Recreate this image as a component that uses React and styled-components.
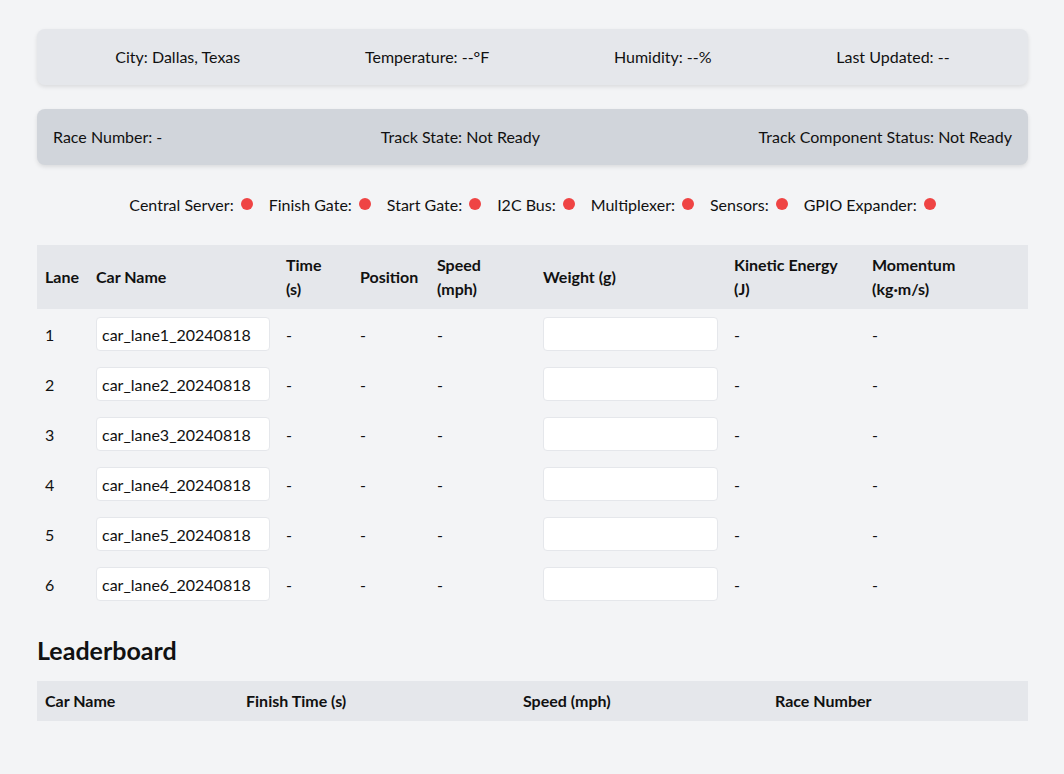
import React from 'react'
import styled, { createGlobalStyle } from 'styled-components'

const GlobalStyle = createGlobalStyle`
  body {
    margin: 0;
    background: #f3f4f6;
    font-family: Lato, "Open Sans", sans-serif;
    font-size: 16px;
    color: #111;
  }
`

const Page = styled.div`
  padding: 29px 36px 40px 37px;
`

const WeatherCard = styled.div`
  display: flex;
  justify-content: space-around;
  align-items: center;
  height: 56px;
  padding: 0 16px 1px;
  box-sizing: border-box;
  background: #e5e7eb;
  border-radius: 8px;
  box-shadow: 0 2px 4px rgba(0, 0, 0, 0.1);
`

const TrackCard = styled.div`
  display: flex;
  justify-content: space-between;
  align-items: center;
  height: 56px;
  margin-top: 24px;
  padding: 0 16px 1px;
  box-sizing: border-box;
  background: #d1d5db;
  border-radius: 8px;
  box-shadow: 0 2px 4px rgba(0, 0, 0, 0.1);
`

const StatusRow = styled.div`
  display: flex;
  justify-content: center;
  align-items: center;
  gap: 16px;
  height: 80px;
  padding-bottom: 2px;
  box-sizing: border-box;
`

const StatusItem = styled.div`
  display: flex;
  align-items: center;
  gap: 7px;
`

const Dot = styled.span`
  width: 12px;
  height: 12px;
  border-radius: 50%;
  background: ${p => (p.$ok ? '#22c55e' : '#ef4444')};
`

const Table = styled.table`
  width: 100%;
  border-collapse: collapse;
  table-layout: fixed;
`

const Th = styled.th`
  box-sizing: border-box;
  background: #e5e7eb;
  text-align: left;
  font-weight: 700;
  padding: 0 8px;
  height: ${p => p.$h || 64}px;
  line-height: 24px;
  ${p => (p.$w ? `width: ${p.$w}px;` : '')}
`

const Td = styled.td`
  padding: 0 8px;
  height: 50px;
`

const Input = styled.input`
  box-sizing: border-box;
  width: ${p => p.$w}px;
  height: 34px;
  padding: 0 5px;
  border: 1px solid #e5e7eb;
  border-radius: 4px;
  background: #fff;
  font: inherit;
  color: #111;
`

const Heading = styled.h2`
  margin: 25px 0 15px;
  font-size: 25px;
  line-height: 32px;
  font-weight: 700;
`

const statuses = ['Central Server', 'Finish Gate', 'Start Gate', 'I2C Bus', 'Multiplexer', 'Sensors', 'GPIO Expander']
const lanes = [1, 2, 3, 4, 5, 6]

export default function App() {
  return (
    <>
      <GlobalStyle />
      <Page>
        <WeatherCard>
          <span>City: Dallas, Texas</span>
          <span>Temperature: --°F</span>
          <span>Humidity: --%</span>
          <span>Last Updated: --</span>
        </WeatherCard>
        <TrackCard>
          <span>Race Number: -</span>
          <span>Track State: Not Ready</span>
          <span>Track Component Status: Not Ready</span>
        </TrackCard>
        <StatusRow>
          {statuses.map(s => (
            <StatusItem key={s}>
              {s}: <Dot />
            </StatusItem>
          ))}
        </StatusRow>
        <Table>
          <thead>
            <tr>
              <Th $w={51}>Lane</Th>
              <Th $w={190}>Car Name</Th>
              <Th $w={74}>Time<br />(s)</Th>
              <Th $w={77}>Position</Th>
              <Th $w={106}>Speed<br />(mph)</Th>
              <Th $w={191}>Weight (g)</Th>
              <Th $w={138}>Kinetic Energy<br />(J)</Th>
              <Th>Momentum<br />(kg·m/s)</Th>
            </tr>
          </thead>
          <tbody>
            {lanes.map(n => (
              <tr key={n}>
                <Td>{n}</Td>
                <Td><Input $w={174} defaultValue={`car_lane${n}_20240818`} /></Td>
                <Td>-</Td>
                <Td>-</Td>
                <Td>-</Td>
                <Td><Input $w={175} /></Td>
                <Td>-</Td>
                <Td>-</Td>
              </tr>
            ))}
          </tbody>
        </Table>
        <Heading>Leaderboard</Heading>
        <Table>
          <thead>
            <tr>
              <Th $h={40} $w={201}>Car Name</Th>
              <Th $h={40} $w={277}>Finish Time (s)</Th>
              <Th $h={40} $w={252}>Speed (mph)</Th>
              <Th $h={40}>Race Number</Th>
            </tr>
          </thead>
        </Table>
      </Page>
    </>
  )
}
